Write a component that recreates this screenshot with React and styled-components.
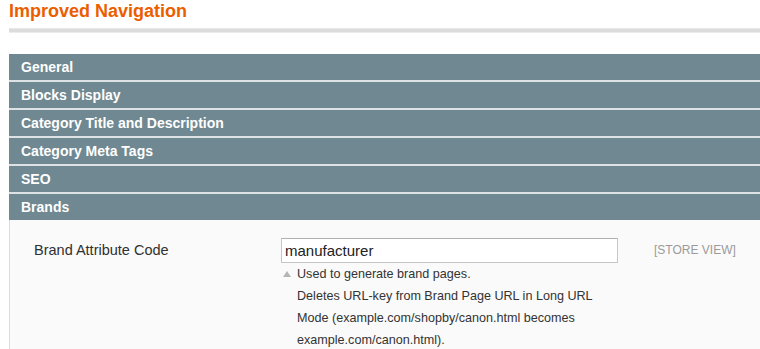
import React from 'react';
import styled, { createGlobalStyle } from 'styled-components';

const GlobalStyle = createGlobalStyle`
    html, body {
        margin: 0;
        padding: 0;
        background: #fff;
        font-family: "Liberation Sans", Arial, sans-serif;
        overflow: hidden;
    }
`;

const Page = styled.div`
    padding-left: 9px;
    width: 751px;
`;

const Title = styled.h3`
    margin: 0;
    font-size: 18px;
    line-height: 22px;
    font-weight: bold;
    color: #eb5e00;
`;

const Rule = styled.div`
    margin-top: 6px;
    height: 3px;
    background: #dcdcdc;
    border-top: 1px solid #e8e8e8;
    border-bottom: 1px solid #ececec;
`;

const Sections = styled.div`
    margin-top: 21px;
    display: flex;
    flex-direction: column;
    gap: 2px;
    background: #dde3e5;
`;

const SectionBar = styled.div`
    height: 26px;
    line-height: 26px;
    padding-left: 12px;
    background: #6f8891;
    color: #fff;
    font-size: 14px;
    font-weight: bold;
`;

const Panel = styled.div`
    background: #fafafa;
    border-left: 1px solid #dedede;
    padding: 18px 0 10px 24px;
    min-height: 120px;
`;

const FieldRow = styled.div`
    display: grid;
    grid-template-columns: 211px 337px auto;
    column-gap: 36px;
    align-items: start;
`;

const Label = styled.label`
    font-size: 14.5px;
    line-height: 25px;
    color: #303030;
`;

const Input = styled.input`
    box-sizing: border-box;
    width: 100%;
    height: 25px;
    margin: 0;
    padding: 0 3px;
    border: 1px solid #c6c6c6;
    border-top-color: #b0b0b0;
    background: #fff;
    font-family: "Liberation Sans", Arial, sans-serif;
    font-size: 15px;
    color: #222;
    outline: none;
`;

const Note = styled.p`
    position: relative;
    margin: 0;
    padding-left: 16px;
    font-size: 12.6px;
    line-height: 22px;
    color: #333;
`;

const Arrow = styled.span`
    position: absolute;
    left: 2px;
    top: 8px;
    width: 0;
    height: 0;
    border-left: 4px solid transparent;
    border-right: 4px solid transparent;
    border-bottom: 6px solid #b5b5b5;
`;

const Scope = styled.span`
    font-size: 12px;
    line-height: 25px;
    color: #9a9a9a;
    white-space: nowrap;
`;

const sections = [
    'General',
    'Blocks Display',
    'Category Title and Description',
    'Category Meta Tags',
    'SEO',
    'Brands',
];

const App = () => (
    <Page>
        <GlobalStyle />
        <Title>Improved Navigation</Title>
        <Rule />
        <Sections>
            {sections.map((name) => (
                <SectionBar key={name}>{name}</SectionBar>
            ))}
        </Sections>
        <Panel>
            <FieldRow>
                <Label htmlFor="brand_code">Brand Attribute Code</Label>
                <div>
                    <Input id="brand_code" defaultValue="manufacturer" />
                    <Note>
                        <Arrow />
                        Used to generate brand pages.
                        <br />
                        Deletes URL-key from Brand Page URL in Long URL Mode (example.com/shopby/canon.html becomes example.com/canon.html).
                    </Note>
                </div>
                <Scope>[STORE VIEW]</Scope>
            </FieldRow>
        </Panel>
    </Page>
);

export default App;
